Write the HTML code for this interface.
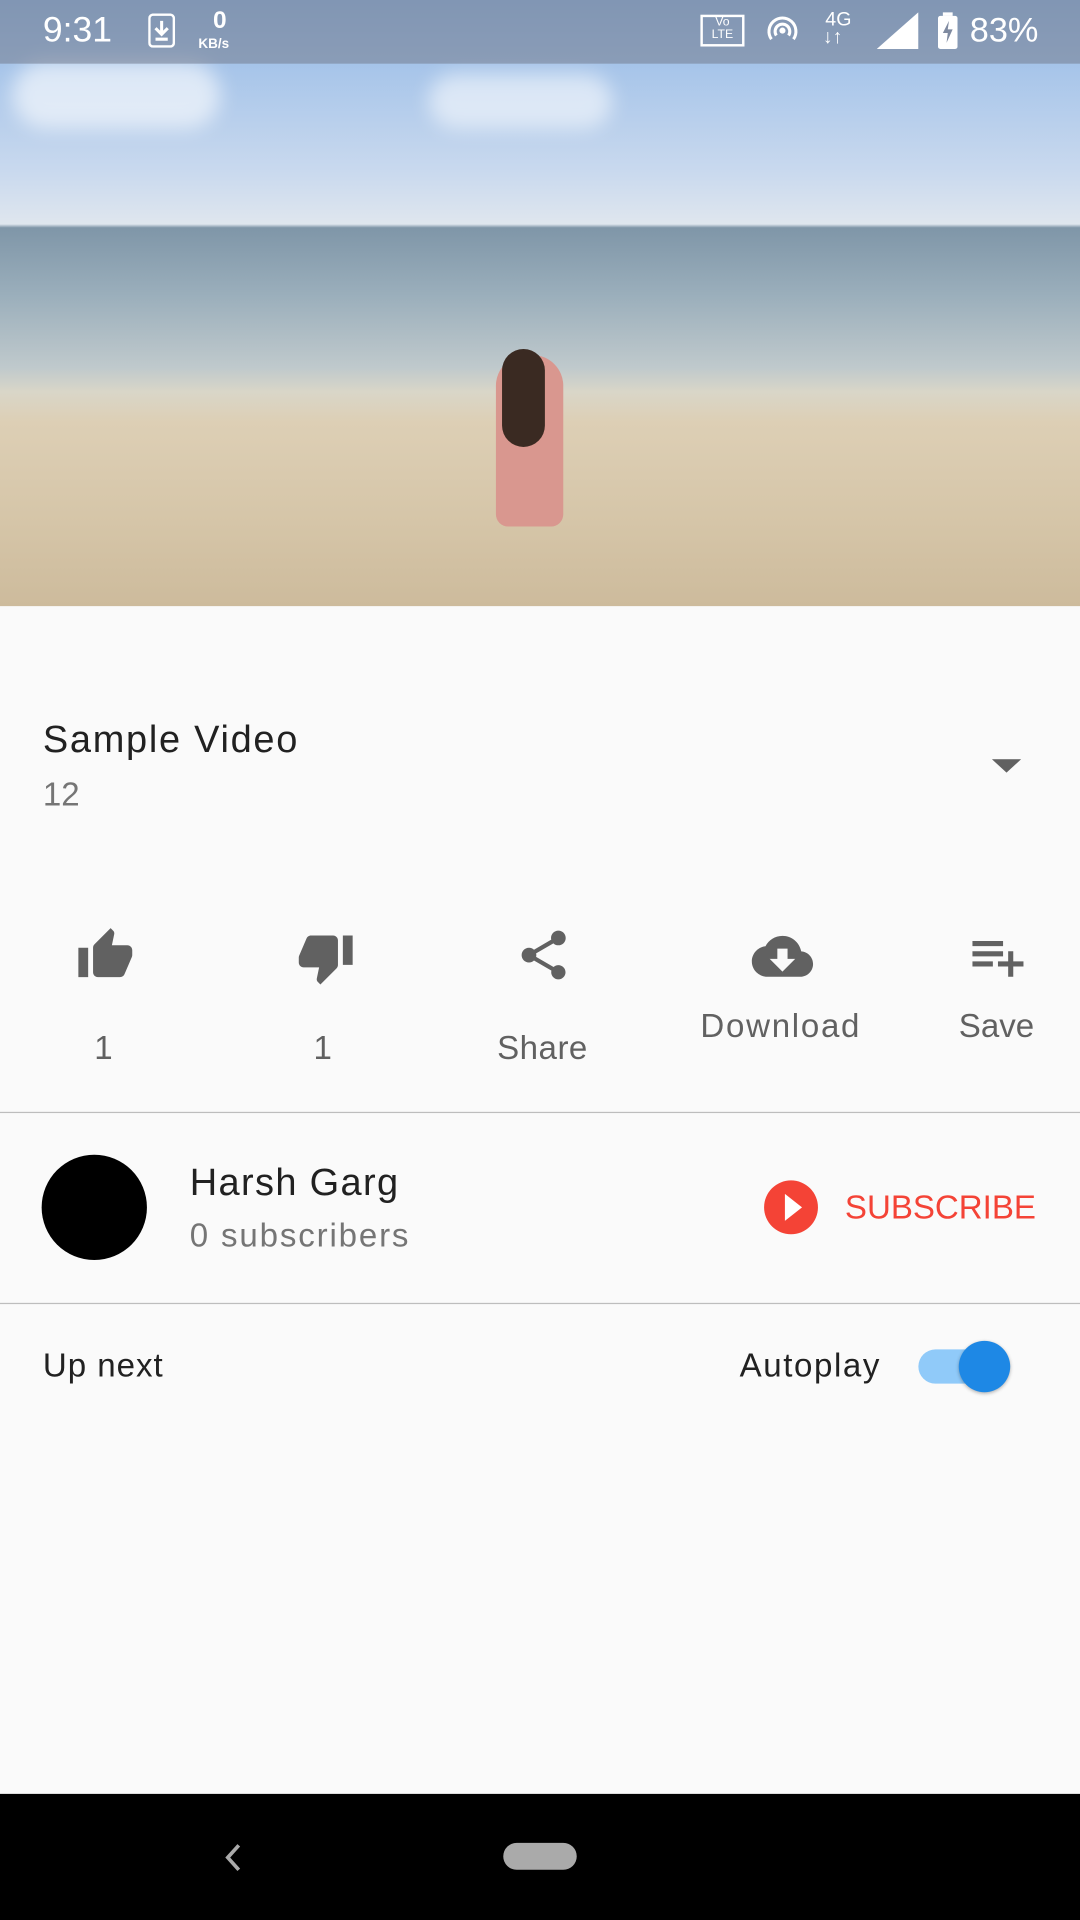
<!DOCTYPE html>
<html><head><meta charset="utf-8"><style>
html,body{margin:0;padding:0;width:1080px;height:1920px;overflow:hidden;background:#fafafa}
#w{position:absolute;left:0;top:0;width:882px;height:1568px;transform:scale(1.22449);transform-origin:0 0;font-family:"Liberation Sans",sans-serif;background:#fafafa}
.a{position:absolute;white-space:nowrap}
.t{letter-spacing:0.9px}
</style></head><body><div id="w">
<div class="a" style="left:0;top:0;width:882px;height:495px;background:linear-gradient(#8fb4e0 0px,#a9c6ea 60px,#c9d9ee 140px,#dfe6ee 183px,#7f96a8 186px,#9aaebb 240px,#bfc9cc 300px,#d9d6c8 320px,#ddcfb5 345px,#d6c6a9 420px,#cdbb9c 495px)"></div>
<div class="a" style="left:10px;top:50px;width:170px;height:55px;border-radius:40px;background:rgba(255,255,255,.6);filter:blur(8px)"></div>
<div class="a" style="left:350px;top:60px;width:150px;height:45px;border-radius:40px;background:rgba(255,255,255,.55);filter:blur(8px)"></div>
<div class="a" style="left:405px;top:290px;width:55px;height:140px;border-radius:25px 25px 10px 10px;background:#d9978f"></div>
<div class="a" style="left:410px;top:285px;width:35px;height:80px;border-radius:18px;background:#3a2a22"></div>
<div class="a" style="left:0;top:0;width:882px;height:52px;background:rgba(120,130,150,.6)"></div>
<div class="a" style="left:35px;top:9px;color:#fff;font-size:29px">9:31</div>
<svg class="a" style="left:121px;top:11px" width="22" height="28"><rect x="1" y="1" width="20" height="26" rx="3" fill="none" stroke="#fff" stroke-width="2"/><path d="M11 6v10M6 12l5 5 5-5M6 21h10" stroke="#fff" stroke-width="2.5" fill="none"/></svg>
<div class="a" style="left:174px;top:6px;color:#fff;font-size:20px;font-weight:bold">0</div>
<div class="a" style="left:162px;top:30px;color:#fff;font-size:11px;font-weight:bold">KB/s</div>
<div class="a" style="left:572px;top:12px;width:36px;height:26px;border:2px solid #fff;box-sizing:border-box;color:#fff;font-size:10px;text-align:center;line-height:10px">Vo<br>LTE</div>
<svg class="a" style="left:624px;top:12px" width="30" height="26"><path d="M6 20a11 11 0 1 1 18 0M10 17a6 6 0 1 1 10 0" stroke="#fff" stroke-width="2.5" fill="none"/><circle cx="15" cy="13" r="2.5" fill="#fff"/></svg>
<div class="a" style="left:674px;top:8px;color:#fff;font-size:16px">4G</div>
<div class="a" style="left:672px;top:22px;color:#fff;font-size:16px">↓↑</div>
<svg class="a" style="left:716px;top:10px" width="34" height="30"><polygon points="34,0 34,30 0,30" fill="#fff"/></svg>
<svg class="a" style="left:766px;top:10px" width="16" height="30"><rect x="4" y="0" width="8" height="3" fill="#fff"/><rect x="0" y="3" width="16" height="27" rx="2" fill="#fff"/><path d="M9 7l-5 10h4l-1 8 5-11h-4z" fill="#7f8aa0"/></svg>
<div class="a" style="left:792px;top:9px;color:#fff;font-size:28px">83%</div>

<div class="a t" style="left:35px;top:586px;font-size:31px;color:#212121;letter-spacing:1.4px">Sample Video</div>
<div class="a" style="left:35px;top:634px;font-size:27px;color:#757575">12</div>
<svg class="a" style="left:810px;top:620px" width="24" height="12"><polygon points="0,0 24,0 12,11" fill="#616161"/></svg>

<svg class="a" style="left:60px;top:756px" width="52" height="48" viewBox="0 0 24 24"><path fill="#616161" d="M1 21h4V9H1v12zm22-11c0-1.1-.9-2-2-2h-6.310l.95-4.57.03-.32c0-.41-.17-.79-.44-1.06L14.17 1 7.59 7.59C7.22 7.950 7 8.45 7 9v10c0 1.1.9 2 2 2h9c.83 0 1.54-.5 1.84-1.22l3.02-7.05c.09-.23.14-.47.14-.73v-2z"/></svg>
<svg class="a" style="left:240px;top:758px" width="52" height="48" viewBox="0 0 24 24"><path fill="#616161" d="M15 3H6c-.83 0-1.54.5-1.84 1.22l-3.02 7.05c-.09.23-.14.47-.14.73v2c0 1.1.9 2 2 2h6.31l-.95 4.57-.03.32c0 .41.17.79.44 1.06L9.83 23l6.59-6.59c.36-.36.58-.86.58-1.41V5c0-1.1-.9-2-2-2zm4 0v12h4V3h-4z"/></svg>
<svg class="a" style="left:420px;top:756px" width="48" height="48" viewBox="0 0 24 24"><path fill="#616161" d="M18 16.08c-.76 0-1.44.3-1.96.77L8.91 12.7c.05-.23.09-.46.09-.7s-.04-.47-.09-.7l7.05-4.11c.54.5 1.25.81 2.04.81 1.66 0 3-1.34 3-3s-1.34-3-3-3-3 1.34-3 3c0 .24.04.47.09.7L8.04 9.81C7.5 9.31 6.79 9 6 9c-1.66 0-3 1.34-3 3s1.34 3 3 3c.79 0 1.5-.31 2.04-.81l7.12 4.16c-.05.21-.08.43-.08.65 0 1.61 1.31 2.92 2.92 2.92 1.61 0 2.920-1.31 2.92-2.92s-1.31-2.92-2.92-2.92z"/></svg>
<svg class="a" style="left:612px;top:756px" width="54" height="50" viewBox="0 0 24 24"><path fill="#616161" d="M19.35 10.04C18.67 6.59 15.64 4 12 4 9.11 4 6.6 5.64 5.35 8.04 2.34 8.36 0 10.91 0 14c0 3.31 2.69 6 6 6h13c2.76 0 5-2.24 5-5 0-2.64-2.05-4.78-4.65-4.96zM17 13l-5 5-5-5h3V9h4v4h3z"/></svg>
<svg class="a" style="left:790px;top:756px" width="50" height="50" viewBox="0 0 24 24"><path fill="#616161" d="M14 10H2v2h12v-2zm0-4H2v2h12V6zm4 8v-4h-2v4h-4v2h4v4h2v-4h4v-2h-4zM2 16h8v-2H2v2z"/></svg>
<div class="a" style="left:77px;top:841px;font-size:27px;color:#616161">1</div>
<div class="a" style="left:256px;top:841px;font-size:27px;color:#616161">1</div>
<div class="a" style="left:406px;top:841px;font-size:27px;color:#616161;letter-spacing:0.4px">Share</div>
<div class="a" style="left:572px;top:823px;font-size:27px;color:#616161;letter-spacing:1.4px">Download</div>
<div class="a" style="left:783px;top:823px;font-size:27px;color:#616161">Save</div>

<div class="a" style="left:0;top:908px;width:882px;height:1px;background:#bdbdbd"></div>
<div class="a" style="left:34px;top:943px;width:86px;height:86px;border-radius:50%;background:#000"></div>
<div class="a" style="left:155px;top:948px;font-size:31px;color:#212121;letter-spacing:1.1px">Harsh Garg</div>
<div class="a" style="left:155px;top:994px;font-size:27px;color:#757575;letter-spacing:1.5px">0 subscribers</div>
<div class="a" style="left:624px;top:964px;width:44px;height:44px;border-radius:50%;background:#f44336"></div>
<svg class="a" style="left:639px;top:975px" width="18" height="22"><polygon points="2,0 16,11 2,22" fill="#fff"/></svg>
<div class="a" style="left:690px;top:971px;font-size:27px;color:#f44336">SUBSCRIBE</div>
<div class="a" style="left:0;top:1064px;width:882px;height:1px;background:#bdbdbd"></div>
<div class="a" style="left:35px;top:1100px;font-size:27px;color:#212121;letter-spacing:0.8px">Up next</div>
<div class="a" style="left:604px;top:1100px;font-size:27px;color:#212121;letter-spacing:1.3px">Autoplay</div>
<div class="a" style="left:750px;top:1102px;width:66px;height:28px;border-radius:14px;background:#90caf9"></div>
<div class="a" style="left:783px;top:1095px;width:42px;height:42px;border-radius:50%;background:#1e88e5;box-shadow:0 1px 3px rgba(0,0,0,.3)"></div>

<div class="a" style="left:0;top:1465px;width:882px;height:103px;background:#000"></div>
<svg class="a" style="left:182px;top:1505px" width="16" height="24"><polyline points="13,2 4,12 13,22" fill="none" stroke="#aaa" stroke-width="3"/></svg>
<div class="a" style="left:411px;top:1505px;width:60px;height:22px;border-radius:11px;background:#aaa"></div>
</div></body></html>
